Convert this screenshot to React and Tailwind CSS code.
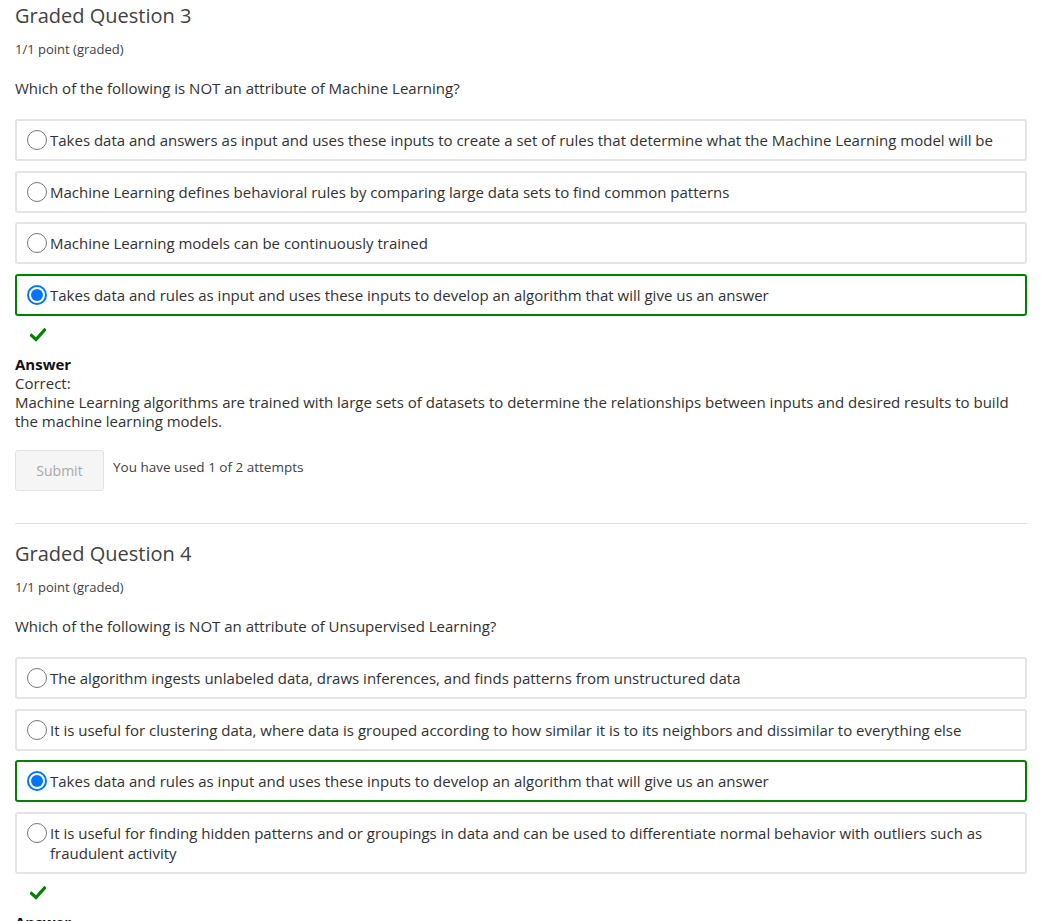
import React from "react";

function Radio({ checked }) {
  if (checked) {
    return (
      <span className="flex h-[20px] w-[20px] shrink-0 items-center justify-center rounded-full border-2 border-[#0075ff] bg-white">
        <span className="block h-[12px] w-[12px] rounded-full bg-[#0075ff]" />
      </span>
    );
  }
  return <span className="block h-[20px] w-[20px] shrink-0 rounded-full border border-[#767676] bg-white" />;
}

function Option({ text, checked }) {
  return (
    <div
      className={
        "flex items-start gap-[3px] rounded-[3px] border-2 py-[9px] pl-[10px] pr-[10px] leading-[20px] " +
        (checked ? "border-[#008100]" : "border-[#e4e4e4]")
      }
    >
      <Radio checked={checked} />
      <span className="text-[15px] leading-[20px] text-[#313131]">{text}</span>
    </div>
  );
}

function Check() {
  return (
    <div className="ml-[15px] mt-[12px] h-[20px] leading-[20px]">
      <svg width="16" height="14" viewBox="0 0 16 14" className="block">
        <path d="M1.5 7.5 L6 11.5 L14.5 2" fill="none" stroke="#008100" strokeWidth="3.2" strokeLinecap="square" />
      </svg>
    </div>
  );
}

function Question({ num, prompt, options, answer }) {
  return (
    <div>
      <h2 className="text-[20px] leading-[32px] text-[#414141]">Graded Question {num}</h2>
      <div className="mt-[9px] text-[13px] leading-[16px] text-[#414141]">1/1 point (graded)</div>
      <p className="mt-[21px] text-[15px] leading-[20px] text-[#313131]">{prompt}</p>
      <div className="mt-[21px] flex flex-col gap-[9.67px]">
        {options.map((o, i) => (
          <Option key={i} text={o} checked={i === answer} />
        ))}
      </div>
    </div>
  );
}

export default function App() {
  return (
    <div className="min-h-[921px] bg-white pl-[15px] pr-[22px] pt-0" style={{ fontFamily: '"Open Sans", "Noto Sans", sans-serif' }}>
      <Question
        num={3}
        prompt="Which of the following is NOT an attribute of Machine Learning?"
        answer={3}
        options={[
          "Takes data and answers as input and uses these inputs to create a set of rules that determine what the Machine Learning model will be",
          "Machine Learning defines behavioral rules by comparing large data sets to find common patterns",
          "Machine Learning models can be continuously trained",
          "Takes data and rules as input and uses these inputs to develop an algorithm that will give us an answer",
        ]}
      />
      <Check />
      <div className="mt-[7px] text-[15px] leading-[19px] text-[#313131]">
        <div className="font-bold text-[#111]">Answer</div>
        <div>Correct:</div>
        <div>
          Machine Learning algorithms are trained with large sets of datasets to determine the relationships between inputs and desired results to build the machine learning models.
        </div>
      </div>
      <div className="mt-[19px] flex items-start gap-[9px]">
        <button className="h-[41px] w-[89px] rounded-[3px] border border-[#e2e2e2] bg-[#f5f5f5] text-[14px] text-[#a8a8a8]">
          Submit
        </button>
        <span className="pt-[8px] text-[13.5px] leading-[18px] text-[#414141]">You have used 1 of 2 attempts</span>
      </div>
      <div className="mt-[32px] border-t border-[#dddddd]" />
      <div className="mt-[14px]">
        <Question
          num={4}
          prompt="Which of the following is NOT an attribute of Unsupervised Learning?"
          answer={2}
          options={[
            "The algorithm ingests unlabeled data, draws inferences, and finds patterns from unstructured data",
            "It is useful for clustering data, where data is grouped according to how similar it is to its neighbors and dissimilar to everything else",
            "Takes data and rules as input and uses these inputs to develop an algorithm that will give us an answer",
            "It is useful for finding hidden patterns and or groupings in data and can be used to differentiate normal behavior with outliers such as fraudulent activity",
          ]}
        />
        <Check />
        <div className="mt-[7px] text-[15px] font-bold leading-[19px] text-[#111]">Answer</div>
      </div>
    </div>
  );
}
